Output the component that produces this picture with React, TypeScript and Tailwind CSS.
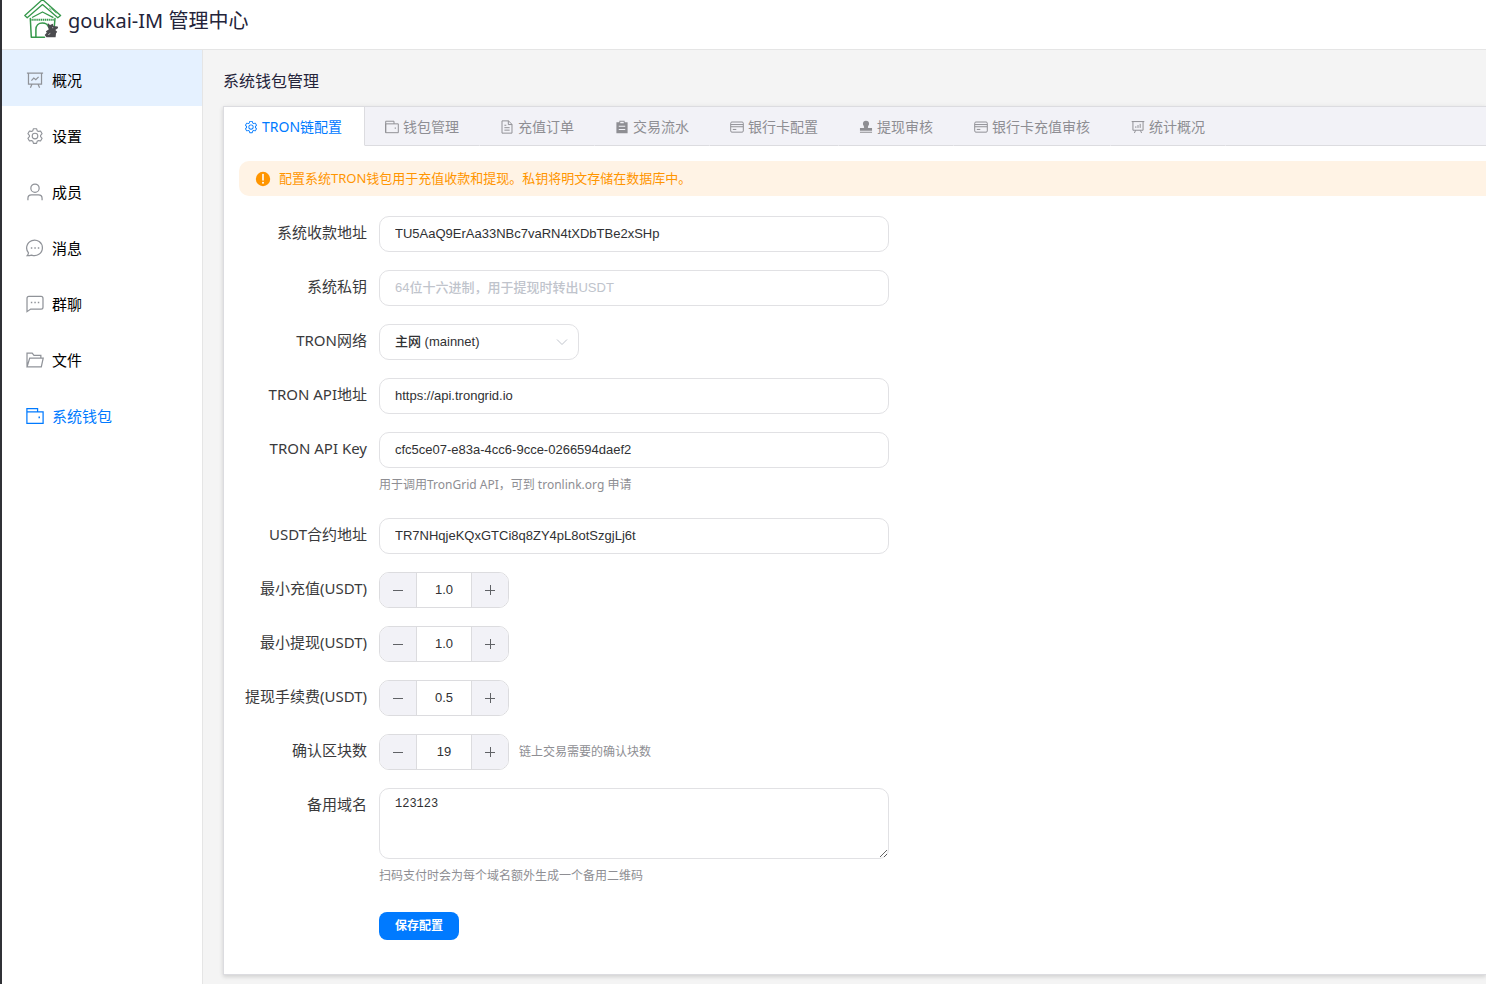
import { useState, type ReactNode } from "react";

type IconName =
  | "board"
  | "setting"
  | "user"
  | "chatRound"
  | "chatSquare"
  | "folder"
  | "wallet"
  | "document"
  | "order"
  | "card"
  | "check"
  | "marketing";

const strokes: Partial<Record<IconName, ReactNode>> = {
  board: (
    <>
      <path d="M.8 1.8h14.4M2.2 1.8v9.9h11.6V1.8M5.2 11.9l-1.3 3M10.8 11.9l1.3 3" />
      <path d="M4.8 8.5l2.1-2.2 1.8 1.5 2.5-2.6" />
    </>
  ),
  marketing: (
    <>
      <path d="M.8 1.8h14.4M2.2 1.8v9.9h11.6V1.8M5.2 11.9l-1.3 3M10.8 11.9l1.3 3" />
      <path d="M5.5 9V7.2M8 9V5.8M10.5 9V4.4" />
    </>
  ),
  user: (
    <>
      <circle cx="8" cy="4.6" r="3.7" />
      <path d="M1.700 15.400v-1.600c0-1.800 1.400-3.200 3.200-3.200h6.200c1.800 0 3.200 1.400 3.200 3.200v1.600" />
    </>
  ),
  chatRound: (
    <>
      <path d="M2.200 12.300A7 6.900 0 1 1 5 14.300c-1.200.3-2.500.5-3.900.5.700-.8 1.100-1.600 1.100-2.500z" />
      <path d="M4.300 8h1.300M7.400 8h1.300M10.500 8h1.300" strokeWidth="1.300" />
    </>
  ),
  chatSquare: (
    <>
      <path d="M.9 14.800V3c0-1 .7-1.700 1.700-1.700h10.800c1 0 1.700.7 1.700 1.700v7.800c0 1-.7 1.700-1.700 1.700H4.200z" />
      <path d="M4.300 6.700h1.300M7.400 6.700h1.300M10.500 6.700h1.300" strokeWidth="1.300" />
    </>
  ),
  folder: (
    <path d="M.9 14.200V1.800h4.600l1.600 2h6.100v2.500M.9 14.200L3.300 6.300h12L13.600 14.200z" />
  ),
  wallet: (
    <>
      <path d="M.8 14.500V1.400h9.500v3M.8 4.400h14.400v10.100H.8z" />
      <path d="M11.100 9.300h1.300" strokeWidth="1.500" />
    </>
  ),
  document: (
    <path d="M9.700 1H2.300v14h11.400V5zM9.500 1v4.200h4.200M5 6h2.200M5 8.800h6M5 11.600h6" />
  ),
  card: (
    <>
      <rect x=".8" y="2.300" width="14.400" height="11.600" rx="1.400" />
      <path d="M1 5.200h14M1 7.700h14M3.200 10.800h4" />
    </>
  ),
};

const solids: Partial<Record<IconName, ReactNode>> = {
  setting: (
    <path
      transform="scale(.015625)"
      d="M600.704 64a32 32 0 0 1 30.464 22.208l35.2 109.376c14.784 7.232 28.928 15.36 42.432 24.512l112.384-24.192a32 32 0 0 1 34.432 15.36L944.32 364.8a32 32 0 0 1-4.032 37.504l-77.12 85.12a357.12 357.12 0 0 1 0 49.024l77.12 85.248a32 32 0 0 1 4.032 37.504l-88.704 153.6a32 32 0 0 1-34.432 15.296L708.8 803.904c-13.44 9.088-27.648 17.28-42.368 24.512l-35.264 109.376A32 32 0 0 1 600.704 960H423.296a32 32 0 0 1-30.464-22.208L357.696 828.48a351.616 351.616 0 0 1-42.56-24.64l-112.32 24.256a32 32 0 0 1-34.432-15.36L79.68 659.2a32 32 0 0 1 4.032-37.504l77.12-85.248a357.12 357.12 0 0 1 0-48.896l-77.12-85.248A32 32 0 0 1 79.68 364.8l88.704-153.6a32 32 0 0 1 34.432-15.296l112.32 24.256c13.568-9.152 27.776-17.408 42.56-24.64l35.2-109.312A32 32 0 0 1 423.232 64H600.64zm-23.424 64H446.72l-36.352 113.088-24.512 11.968a294.113 294.113 0 0 0-34.816 20.096l-22.656 15.36-116.224-25.088-65.28 113.152 79.68 88.192-1.92 27.136a293.12 293.12 0 0 0 0 40.192l1.92 27.136-79.808 88.192 65.344 113.152 116.224-25.024 22.656 15.296a294.113 294.113 0 0 0 34.816 20.096l24.512 11.968L446.72 896h130.688l36.48-113.152 24.448-11.904a288.282 288.282 0 0 0 34.752-20.096l22.592-15.296 116.288 25.024 65.28-113.152-79.744-88.192 1.92-27.136a293.12 293.12 0 0 0 0-40.256l-1.92-27.136 79.808-88.128-65.344-113.152-116.288 24.96-22.592-15.232a287.616 287.616 0 0 0-34.752-20.096l-24.448-11.904L577.344 128zM512 320a192 192 0 1 1 0 384 192 192 0 0 1 0-384zm0 64a128 128 0 1 0 0 256 128 128 0 0 0 0-256z"
    />
  ),
  order: (
    <path
      fillRule="evenodd"
      d="M5 .8h6v1.700h3.400v12.700H1.600V2.500H5zM6 2v1.700h4V2zM4.300 6.500v1.200h7.400V6.500zM4.300 10.300v1.200h7.400v-1.200z"
    />
  ),
  check: (
    <path d="M8 .8a3.500 3.500 0 0 1 3.500 3.500c0 1.500-.9 2.200-1.300 3.700-.2.800 0 1.200.6 1.200h4.100v3H1.100v-3h4.100c.6 0 .8-.4.600-1.200C5.400 6.500 4.500 5.800 4.500 4.300A3.500 3.500 0 0 1 8 .8zM1.100 13.500h13.800v1.200H1.100z" />
  ),
};

function Icon({ name, className }: { name: IconName; className: string }) {
  const solid = solids[name];
  return solid ? (
    <svg viewBox="0 0 16 16" className={className} fill="currentColor" aria-hidden="true">
      {solid}
    </svg>
  ) : (
    <svg
      viewBox="0 0 16 16"
      className={className}
      fill="none"
      stroke="currentColor"
      strokeWidth="1.100"
      aria-hidden="true"
    >
      {strokes[name]}
    </svg>
  );
}

function Logo() {
  return (
    <svg viewBox="0 0 40 40" className="size-10" fill="none" aria-hidden="true">
      <g stroke="#36984b" strokeWidth="1.300" strokeLinejoin="round" strokeLinecap="round">
        <path d="M20.500-.5L2.800 15.600l2.400 2.200L20.500 4.600l15.300 13.200 2.800-2.200z" fill="#fff" />
        <path d="M10.500 17.300l10-5.300 10.500 5.300" />
        <path
          d="M8.300 18.500l1 18.800h4.600V29.500c0-4 2.600-6.500 6.400-6.500 3.200 0 5.500 1.600 6.300 4M14 37.300h8.500M33 18.500l-.8 9"
          strokeWidth="1.500"
        />
        <path d="M26.300 4.600l2.400 2.200M29.500 8.600l4.600 4.300M27.500 8.200l1.600 1.500" strokeWidth=".8" />
      </g>
      <path
        d="M9.500 19.700h22.500"
        stroke="#36984b"
        strokeWidth="2"
        strokeDasharray="1.300 .6"
      />
      <path
        d="M25.800 23l2.200 1.900 2.800-1.100.6 2.200 4.300.4.400 1.700-2.800 1.900 1.900 1.700-1.200 1.700-.4 3.800h-9.200l-1.700-2.100 2-2.300-.8-1.600 2.800-1.800-.8-2.900z"
        fill="#4b4b4f"
      />
      <path d="M26.300 34.600l2-1.200M30.200 27.700h1" stroke="#fff" strokeWidth=".7" />
    </svg>
  );
}

const navItems: { label: string; icon: IconName }[] = [
  { label: "概况", icon: "board" },
  { label: "设置", icon: "setting" },
  { label: "成员", icon: "user" },
  { label: "消息", icon: "chatRound" },
  { label: "群聊", icon: "chatSquare" },
  { label: "文件", icon: "folder" },
  { label: "系统钱包", icon: "wallet" },
];

const tabs: { label: string; icon: IconName }[] = [
  { label: "TRON链配置", icon: "setting" },
  { label: "钱包管理", icon: "wallet" },
  { label: "充值订单", icon: "document" },
  { label: "交易流水", icon: "order" },
  { label: "银行卡配置", icon: "card" },
  { label: "提现审核", icon: "check" },
  { label: "银行卡充值审核", icon: "card" },
  { label: "统计概况", icon: "marketing" },
];

const fieldStyle =
  "block rounded-[10px] border border-[#e1e1e4] bg-white px-[15px] text-[13px] text-[#303133] outline-none focus:border-[#007aff] font-['Liberation_Sans','Noto_Sans_CJK_SC',sans-serif]";

function Row({ id, label, children }: { id: string; label: string; children: ReactNode }) {
  return (
    <div className="mb-[18px] flex items-start">
      <label
        htmlFor={id}
        className="w-[140px] shrink-0 pr-3 text-right text-[15px] leading-8 whitespace-nowrap text-[#3a3a3c]"
      >
        {label}
      </label>
      <div className="min-w-0 flex-1">{children}</div>
    </div>
  );
}

function TextRow(props: { id: string; label: string; value?: string; placeholder?: string; hint?: string }) {
  return (
    <Row id={props.id} label={props.label}>
      <input
        id={props.id}
        type="text"
        defaultValue={props.value}
        placeholder={props.placeholder}
        className={`${fieldStyle} h-9 w-full max-w-[510px] pb-0.5 placeholder:font-medium placeholder:text-[#c0c4cc]`}
      />
      {props.hint && <Hint>{props.hint}</Hint>}
    </Row>
  );
}

function Hint({ children }: { children: ReactNode }) {
  return <p className="mt-[9px] mb-[7px] text-xs leading-4 text-[#8e8e93]">{children}</p>;
}

function Sign({ plus }: { plus?: boolean }) {
  return (
    <svg viewBox="0 0 12 12" className="size-3" stroke="currentColor" aria-hidden="true">
      <path d={plus ? "M1 6.500h10M6.500 1v10" : "M1 6.500h10"} />
    </svg>
  );
}

function NumberRow(props: { id: string; label: string; value: number; step: number; digits: number; note?: string }) {
  const [value, setValue] = useState(props.value);
  const change = (by: number) => setValue((v) => Math.max(0, v + by));
  return (
    <Row id={props.id} label={props.label}>
      <div className="flex items-center gap-2.5">
        <div className="flex h-9 w-[130px] overflow-hidden rounded-[10px] border border-[#dcdcdf]">
          <button
            type="button"
            aria-label={`${props.label} 减少`}
            onClick={() => change(-props.step)}
            className="flex w-[37px] shrink-0 items-center justify-center border-r border-[#dcdcdf] bg-[#f2f2f7] text-[#606266]"
          >
            <Sign />
          </button>
          <input
            id={props.id}
            type="text"
            inputMode="decimal"
            value={value.toFixed(props.digits)}
            onChange={(e) => setValue(Number(e.target.value) || 0)}
            className="w-full min-w-0 flex-1 bg-white text-center font-['Liberation_Sans',sans-serif] text-[13px] text-[#303133] outline-none"
          />
          <button
            type="button"
            aria-label={`${props.label} 增加`}
            onClick={() => change(props.step)}
            className="flex w-[37px] shrink-0 items-center justify-center border-l border-[#dcdcdf] bg-[#f2f2f7] text-[#606266]"
          >
            <Sign plus />
          </button>
        </div>
        {props.note && <span className="text-xs text-[#8e8e93]">{props.note}</span>}
      </div>
    </Row>
  );
}

export default function App() {
  return (
    <div className="flex min-h-screen flex-col overflow-x-hidden border-l-2 border-[#303136] bg-white font-['Noto_Sans','Noto_Sans_CJK_SC',sans-serif] text-[#1c1c1e]">
      <header className="flex h-[50px] items-center gap-1.5 border-b border-[#e5e5e5] pb-2.5 pl-5">
        <Logo />
        <h1 className="pt-0.5 text-xl leading-6 whitespace-nowrap text-[#24243a]">goukai-IM 管理中心</h1>
      </header>

      <div className="flex flex-1">
        <nav className="w-[201px] shrink-0 border-r border-[#e5e5e5] bg-white">
          {navItems.map((item, i) => (
            <a
              key={item.label}
              href={`#${item.icon}`}
              className={`flex h-14 items-center gap-2 pt-1 pl-6 text-[15px] ${
                i === 0 ? "bg-[#e5f1ff]" : ""
              } ${i === 6 ? "text-[#007aff]" : "text-black"}`}
            >
              <Icon name={item.icon} className={`size-[18px] ${i === 6 ? "text-[#007aff]" : "text-[#909399]"}`} />
              <span className="pb-px leading-5">{item.label}</span>
            </a>
          ))}
        </nav>

        <main className="min-w-0 flex-1 bg-[#f4f4f4] pt-5 pl-5">
          <h2 className="mb-3.5 text-base leading-[22px] text-[#24243a]">系统钱包管理</h2>

          <section className="border border-r-0 border-[#dcdce0] bg-white shadow-[0_2px_4px_0_rgba(0,0,0,0.12),0_0_6px_0_rgba(0,0,0,0.04)]">
            <div role="tablist" className="flex h-[39px] bg-[#f2f2f7] text-sm whitespace-nowrap">
              {tabs.map((tab, i) => (
                <button
                  key={tab.label}
                  type="button"
                  role="tab"
                  aria-selected={i === 0}
                  className={`flex shrink-0 items-center gap-1 border-r border-b px-5 pt-0.5 ${
                    i === 0
                      ? "min-w-[141px] border-r-[#dcdce0] border-b-white bg-white text-[#007aff]"
                      : "border-r-transparent border-b-[#dcdce0] text-[#8e8e93]"
                  }`}
                >
                  <Icon name={tab.icon} className="size-3.5" />
                  {tab.label}
                </button>
              ))}
              <div className="flex-1 border-b border-[#dcdce0]" />
            </div>

            <div className="pt-[15px] pb-[13px] pl-[15px]">
              <div
                role="alert"
                className="mb-5 flex h-[35px] items-center gap-2 rounded-l-[10px] bg-[#fff3e5] pl-4 text-[13px] text-[#ff9500]"
              >
                <svg viewBox="0 0 16 16" className="size-4" aria-hidden="true">
                  <circle cx="8" cy="8" r="7.200" fill="currentColor" />
                  <path d="M8 3.600v5.300" stroke="#fff" strokeWidth="1.600" strokeLinecap="round" />
                  <circle cx="8" cy="11.700" r="1" fill="#fff" />
                </svg>
                <p>配置系统TRON钱包用于充值收款和提现。私钥将明文存储在数据库中。</p>
              </div>

              <form onSubmit={(e) => e.preventDefault()}>
                <TextRow id="address" label="系统收款地址" value="TU5AaQ9ErAa33NBc7vaRN4tXDbTBe2xSHp" />
                <TextRow id="secret" label="系统私钥" placeholder="64位十六进制，用于提现时转出USDT" />
                <Row id="network" label="TRON网络">
                  <div className="relative w-[200px]">
                    <select id="network" className={`${fieldStyle} h-9 w-full appearance-none font-medium`}>
                      <option>主网 (mainnet)</option>
                      <option>测试网 (shasta)</option>
                    </select>
                    <svg
                      viewBox="0 0 12 12"
                      className="pointer-events-none absolute top-3 right-[11px] size-3 text-[#c0c4cc]"
                      fill="none"
                      stroke="currentColor"
                      aria-hidden="true"
                    >
                      <path d="M1 3.500l5 5 5-5" />
                    </svg>
                  </div>
                </Row>
                <TextRow id="api" label="TRON API地址" value="https://api.trongrid.io" />
                <TextRow
                  id="key"
                  label="TRON API Key"
                  value="cfc5ce07-e83a-4cc6-9cce-0266594daef2"
                  hint="用于调用TronGrid API，可到 tronlink.org 申请"
                />
                <TextRow id="contract" label="USDT合约地址" value="TR7NHqjeKQxGTCi8q8ZY4pL8otSzgjLj6t" />
                <NumberRow id="min-deposit" label="最小充值(USDT)" value={1} step={1} digits={1} />
                <NumberRow id="min-withdraw" label="最小提现(USDT)" value={1} step={1} digits={1} />
                <NumberRow id="fee" label="提现手续费(USDT)" value={0.5} step={0.5} digits={1} />
                <NumberRow
                  id="blocks"
                  label="确认区块数"
                  value={19}
                  step={1}
                  digits={0}
                  note="链上交易需要的确认块数"
                />
                <Row id="domains" label="备用域名">
                  <textarea
                    id="domains"
                    defaultValue="123123"
                    className="block h-[71px] w-full max-w-[510px] resize-y rounded-[10px] border border-[#e1e1e4] bg-white px-[15px] py-1.5 font-['Liberation_Mono',monospace] text-xs leading-[18px] text-[#303133] outline-none focus:border-[#007aff]"
                  />
                  <Hint>扫码支付时会为每个域名额外生成一个备用二维码</Hint>
                </Row>
                <div className="mb-[18px] flex h-[34px] items-center pl-[140px]">
                  <button type="submit" className="h-7 rounded-lg bg-[#007aff] px-4 text-xs font-bold text-white">
                    保存配置
                  </button>
                </div>
              </form>
            </div>
          </section>
        </main>
      </div>
    </div>
  );
}
